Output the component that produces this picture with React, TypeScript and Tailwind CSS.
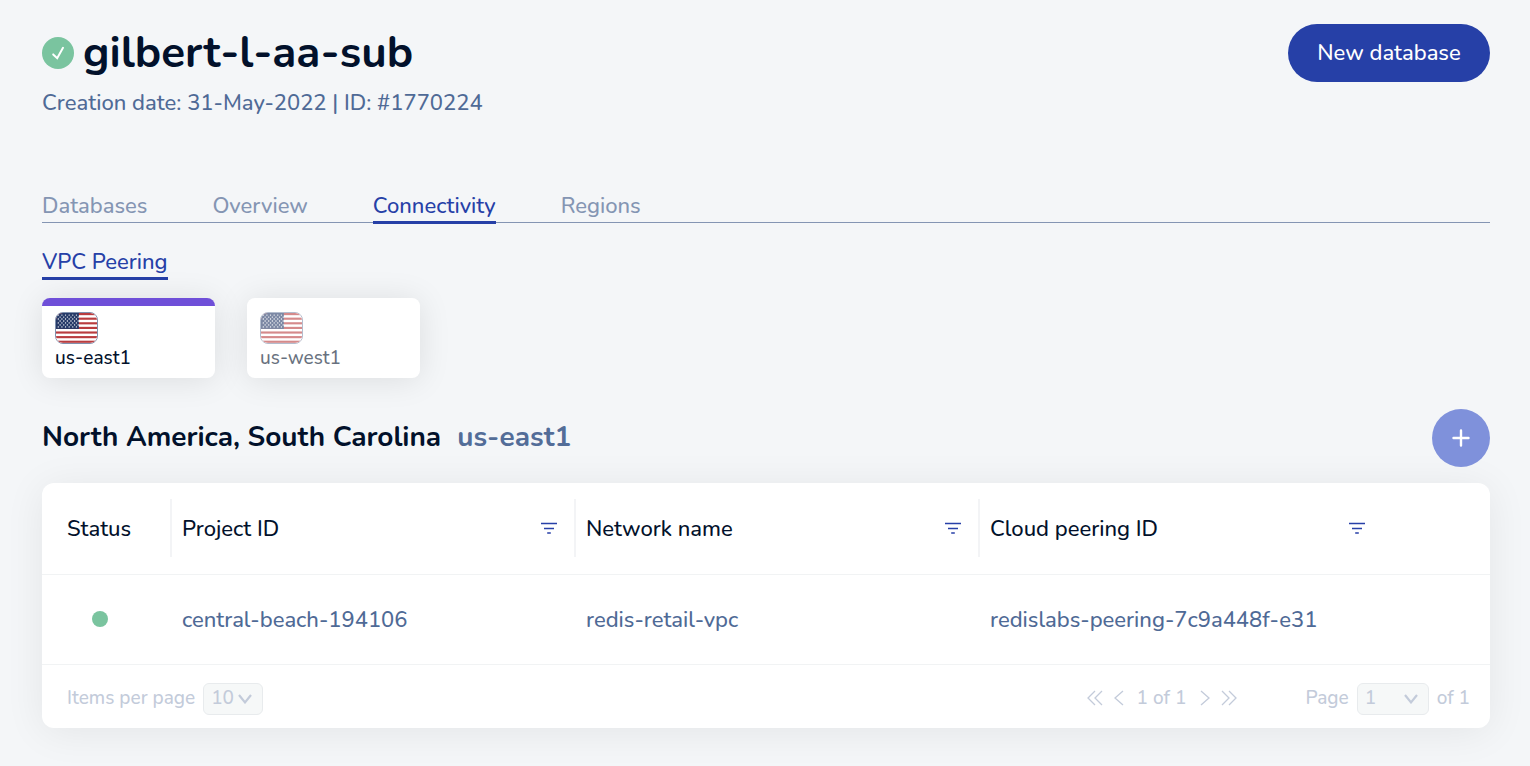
import { useState } from "react";

const tabs = ["Databases", "Overview", "Connectivity", "Regions"];
const regions = ["us-east1", "us-west1"];
const columns = ["Project ID", "Network name", "Cloud peering ID"];
const rows = [["central-beach-194106", "redis-retail-vpc", "redislabs-peering-7c9a448f-e31"]];

function Flag() {
  const stars = [];
  for (let row = 0; row < 7; row++) {
    for (let col = 0; col < 6; col++) {
      stars.push(
        <circle key={`${row}-${col}`} cx={2.4 + col * 3.8 + (row % 2) * 1.9} cy={2.2 + row * 2.1} r="0.7" fill="#fff" />,
      );
    }
  }
  return (
    <span className="block h-8 w-[43px] overflow-hidden rounded-lg border border-[#8091ae]">
      <svg viewBox="0 0 43 32" preserveAspectRatio="none" className="size-full" aria-hidden="true">
        <rect width="43" height="32" fill="#fff" />
        {[0, 1, 2, 3, 4, 5, 6].map((i) => (
          <rect key={i} y={i * 4.92} width="43" height="2.3" fill="#b93c3f" />
        ))}
        <rect width="24" height="17" fill="#263a68" />
        {stars}
      </svg>
    </span>
  );
}

function FilterIcon() {
  return (
    <svg width="16" height="12" viewBox="0 0 16 12" fill="none" stroke="#2840a8" strokeWidth="1.4" aria-hidden="true">
      <path d="M0 1.5h16M3 6.5h10M6.2 11h3.6" />
    </svg>
  );
}

function Chevron() {
  return (
    <svg
      width="14"
      height="10"
      viewBox="0 0 14 10"
      fill="none"
      stroke="#c3cbda"
      strokeWidth="2.2"
      className="pointer-events-none absolute top-[11px] right-[11px]"
      aria-hidden="true"
    >
      <path d="M1 1l6 7.4L13 1" />
    </svg>
  );
}

function Arrow({ label, d, width }: { label: string; d: string; width: number }) {
  return (
    <button type="button" aria-label={label} disabled>
      <svg width={width} height="16" viewBox={`0 0 ${width} 16`} fill="none" stroke="#c3cbda" strokeWidth="1.3" aria-hidden="true">
        <path d={d} />
      </svg>
    </button>
  );
}

export default function App() {
  const [tab, setTab] = useState("Connectivity");
  const [region, setRegion] = useState("us-east1");

  return (
    <div className="min-h-screen bg-[#f4f6f8] pt-6 pr-10 pb-[38px] pl-[42px] font-[Nunito,Lato,sans-serif] text-[22px] leading-7 font-medium text-[#02112b]">
      <header className="flex items-start justify-between">
        <div>
          <div className="flex h-[58px] items-center gap-[9px]">
            <svg width="32" height="32" viewBox="0 0 32 32" aria-hidden="true">
              <circle cx="16" cy="16" r="16" fill="#7ac49f" />
              <path d="M11.2 17.4l4 3.8L21 10.8" fill="none" stroke="#fff" strokeWidth="2" strokeLinecap="round" />
            </svg>
            <h1 className="text-[44px] leading-[56px] font-bold">gilbert-l-aa-sub</h1>
          </div>
          <p className="mt-[7px] text-[#4f6a96]">Creation date: 31-May-2022 | ID: #1770224</p>
        </div>
        <button type="button" className="h-[58px] w-[202px] rounded-full bg-[#2640a7] font-medium text-white">
          New database
        </button>
      </header>

      <nav className="mt-[74px] flex h-8 gap-[65px] border-b border-[#8495b3]">
        {tabs.map((name) => (
          <button
            key={name}
            type="button"
            onClick={() => setTab(name)}
            className={
              name === tab
                ? "-mb-0.5 h-[33px] border-b-3 border-[#2640a7] text-[#2640a7]"
                : "-mb-0.5 h-[33px] border-b-3 border-transparent text-[#8495b3]"
            }
          >
            {name}
          </button>
        ))}
      </nav>

      <a href="#vpc-peering" className="mt-[25px] inline-block h-8 border-b-3 border-[#2640a7] text-[#2640a7] align-top">
        VPC Peering
      </a>

      <div className="mt-[18px] flex gap-8">
        {regions.map((name) => (
          <button
            key={name}
            type="button"
            onClick={() => setRegion(name)}
            className={
              name === region
                ? "h-20 w-[173px] overflow-hidden rounded-lg border-t-8 border-[#6f4fd8] bg-white px-[13px] pt-1.5 pb-2 text-left text-[19px] leading-6 shadow-[0_2px_32px_#0000001a]"
                : "h-20 w-[173px] overflow-hidden rounded-lg border-t-8 border-white bg-white px-[13px] pt-1.5 pb-2 text-left text-[19px] leading-6 shadow-[0_2px_32px_#0000001a]"
            }
          >
            <span className={name === region ? "block" : "block opacity-60"}>
              <Flag />
              <span className="mt-0.5 block">{name}</span>
            </span>
          </button>
        ))}
      </div>

      <div className="mt-[31px] flex items-center justify-between">
        <h2 className="flex gap-4 pb-0.5 text-[28px] leading-9 font-bold">
          <span>North America, South Carolina</span>
          <span className="text-[#536d98]">us-east1</span>
        </h2>
        <button type="button" aria-label="Add peering" className="grid size-[58px] place-items-center rounded-full bg-[#7f91db]">
          <svg width="18" height="18" viewBox="0 0 18 18" stroke="#fff" strokeWidth="2.4" strokeLinecap="round" aria-hidden="true">
            <path d="M9 1.5v15M1.5 9h15" />
          </svg>
        </button>
      </div>

      <section className="mt-4 overflow-hidden rounded-xl bg-white shadow-[0_4px_40px_#00000012]">
        <table className="w-full table-fixed border-collapse text-left">
          <colgroup>
            <col className="w-[128px]" />
            <col />
            <col />
            <col />
            <col className="w-[108px]" />
          </colgroup>
          <thead>
            <tr className="h-[91px] border-b border-[#f1f3f4]">
              <th className="p-0 font-medium">
                <div className="flex h-[58px] items-center pt-0.5 pl-[25px]">Status</div>
              </th>
              {columns.map((name) => (
                <th key={name} className="p-0 font-medium">
                  <div className="flex h-[58px] items-center justify-between border-l-2 border-[#f3f4f6] pr-[17px] pl-2.5">
                    <span className="pt-0.5">{name}</span>
                    <button type="button" aria-label={`Filter ${name}`}>
                      <FilterIcon />
                    </button>
                  </div>
                </th>
              ))}
              <td />
            </tr>
          </thead>
          <tbody>
            {rows.map((row) => (
              <tr key={row[0]} className="h-[90px] border-b border-[#f1f3f4] text-[#4f6a96]">
                <td className="p-0">
                  <span role="img" aria-label="Active" className="ml-[50px] block size-4 rounded-full bg-[#7ac49f]" />
                </td>
                {row.map((value) => (
                  <td key={value} className="p-0 pt-0.5 pl-3">
                    {value}
                  </td>
                ))}
                <td />
              </tr>
            ))}
          </tbody>
        </table>

        <footer className="flex h-[63px] items-center pt-[5px] pr-5 pl-[25px] text-[19px] text-[#c3cbda]">
          <label htmlFor="page-size" className="pb-0.5">
            Items per page
          </label>
          <span className="relative ml-2">
            <select id="page-size" disabled className="block h-8 w-[60px] appearance-none rounded-md border border-[#e8ebed] bg-[#f6f8f8] pb-0.5 pl-[7px] text-[#c3cbda] opacity-100">
              <option>10</option>
            </select>
            <Chevron />
          </span>
          <div className="ml-auto flex items-center pb-0.5">
            <Arrow label="First page" d="M8 1L1 8l7 7M15 1L8 8l7 7" width={16} />
            <span className="ml-[11px] flex">
              <Arrow label="Previous page" d="M9 1L1 8l8 7" width={10} />
            </span>
            <span className="mx-3 w-[50px] text-center whitespace-nowrap">1 of 1</span>
            <span className="ml-0.5 flex">
              <Arrow label="Next page" d="M1 1l8 7-8 7" width={10} />
            </span>
            <span className="ml-[11px] flex">
              <Arrow label="Last page" d="M1 1l7 7-7 7M8 1l7 7-7 7" width={16} />
            </span>
          </div>
          <label htmlFor="page" className="ml-[68px] pb-0.5">
            Page
          </label>
          <span className="relative mx-2">
            <select id="page" disabled className="block h-8 w-[72px] appearance-none rounded-md border border-[#e8ebed] bg-[#f6f8f8] pb-0.5 pl-[7px] text-[#c3cbda] opacity-100">
              <option>1</option>
            </select>
            <Chevron />
          </span>
          <span className="pb-0.5">of 1</span>
        </footer>
      </section>
    </div>
  );
}
